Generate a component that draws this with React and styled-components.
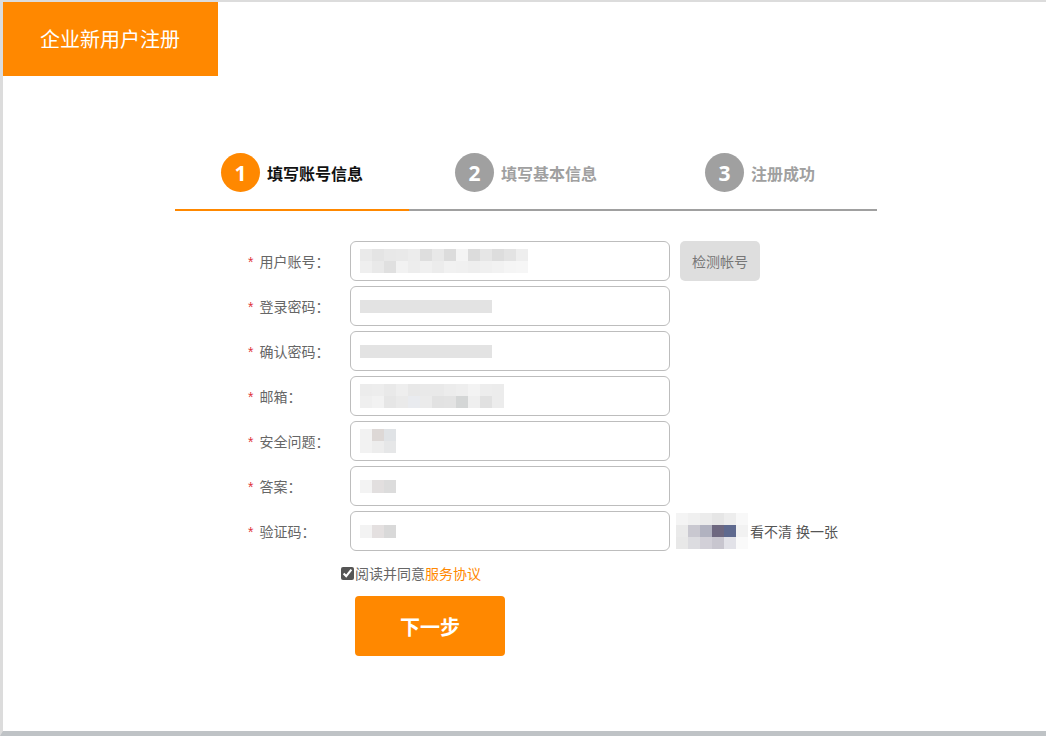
import React from "react";
import styled, { createGlobalStyle } from "styled-components";

const orange = "#ff8800";
const grey = "#a0a0a0";

const Global = createGlobalStyle`
  html, body {
    margin: 0;
    padding: 0;
    background: #fff;
  }
  body {
    font-family: "Liberation Sans", "Noto Sans CJK SC", sans-serif;
  }
`;

const Page = styled.div`
  width: 1046px;
  height: 736px;
  box-sizing: border-box;
  border-top: 2px solid #dcdcdc;
  border-left: 3px solid #dcdcdc;
  border-bottom: 5px solid #bfc3c6;
  overflow: hidden;
`;

const Header = styled.div`
  width: 215px;
  height: 74px;
  background: ${orange};
  color: #fff;
  font-size: 20px;
  line-height: 76px;
  padding-left: 37px;
  box-sizing: border-box;
`;

const Steps = styled.div`
  display: flex;
  width: 702px;
  margin: 67px 0 0 172px;
`;

const Step = styled.div`
  flex: 1;
  display: flex;
  align-items: flex-start;
  justify-content: center;
  gap: 7px;
  height: 68px;
  box-sizing: border-box;
  padding-top: 10px;
  border-bottom: 2px solid ${(p) => (p.$active ? orange : grey)};
`;

const Circle = styled.div`
  width: 39px;
  height: 39px;
  border-radius: 50%;
  background: ${(p) => (p.$active ? orange : grey)};
  color: #fff;
  font-family: "Open Sans", "Liberation Sans", sans-serif;
  font-weight: 700;
  font-size: 21px;
  display: flex;
  align-items: center;
  justify-content: center;
`;

const StepText = styled.div`
  font-size: 16px;
  font-weight: 700;
  line-height: 39px;
  color: ${(p) => (p.$active ? "#111" : grey)};
  margin-top: 2px;
`;

const Form = styled.div`
  margin: 30px 0 0 245px;
  display: flex;
  flex-direction: column;
  gap: 5px;
`;

const Row = styled.div`
  display: flex;
  align-items: center;
  height: 40px;
`;

const Label = styled.div`
  width: 102px;
  font-size: 14px;
  color: #666;
  &::before {
    content: "*";
    color: #e0353a;
    margin-right: 6px;
  }
`;

const Field = styled.div`
  width: 320px;
  height: 40px;
  box-sizing: border-box;
  border: 1px solid #bdbdbd;
  border-radius: 6px;
  background: #fff;
  display: flex;
  align-items: center;
  padding-left: 9px;
`;

const Mosaic = styled.div`
  display: grid;
  grid-template-columns: repeat(${(p) => p.$cols}, 12px);
  grid-auto-rows: ${(p) => p.$h || 12}px;
`;

const Cell = styled.div`
  background: ${(p) => p.$c};
`;

const CheckBtn = styled.div`
  margin-left: 10px;
  width: 80px;
  height: 40px;
  border-radius: 5px;
  background: #dedede;
  color: #777;
  font-size: 14px;
  display: flex;
  align-items: center;
  justify-content: center;
`;

const Captcha = styled.div`
  margin-left: 6px;
  width: 70px;
  height: 40px;
  display: flex;
  align-items: center;
`;

const Refresh = styled.div`
  font-size: 14px;
  color: #555;
  margin-left: 4px;
`;

const Agree = styled.label`
  display: flex;
  align-items: center;
  margin: 7px 0 0 93px;
  font-size: 14px;
  color: #666;
  input {
    margin: 0 1px 0 0;
    width: 13px;
    height: 13px;
    accent-color: #555;
  }
  a {
    color: ${orange};
    text-decoration: none;
  }
`;

const NextBtn = styled.button`
  margin: 8px 0 0 107px;
  width: 150px;
  height: 60px;
  border: none;
  border-radius: 4px;
  background: ${orange};
  color: #fff;
  font-family: "Liberation Sans", "Noto Sans CJK SC", sans-serif;
  font-size: 20px;
  font-weight: 700;
  align-self: flex-start;
`;

const L = "#e9e9e9";
const mosaics = [
  { cols: 14, cells: ["#eaeaea", "#e4e4e4", "#e8e8e8", "#e9e9e9", "#ececec", "#dedede", "#e8e8e8", "#dcdcdc", "#f4f4f4", "#dcdcdc", "#e6e6e6", "#dddddd", "#e3e3e3", "#eeeeee",
    "#efefef", "#e9e9e9", "#e0e0e0", "#f2f2f2", "#ededed", "#f0f0f0", "#ececec", "#f1f1f1", "#f0f0f0", "#eeeeee", "#f0f0f0", "#f2f2f2", "#f5f5f5", "#f6f6f6"] },
  { cols: 11, h: 13, cells: Array(11).fill("#e3e3e3") },
  { cols: 11, h: 13, cells: Array(11).fill("#e3e3e3") },
  { cols: 12, cells: ["#ececec", "#ededed", "#e9e9e9", "#eeeeee", "#e8e8e8", "#e9e9e9", "#e9e9e9", "#ececec", "#eeeeee", "#f3f3f3", "#ededed", "#ececec",
    "#efefef", "#f2f2f2", "#e6e6e6", "#eaeaea", "#e9ebef", "#ebebeb", "#e2e2e2", "#e3e3e3", "#d4d6d6", "#efefef", "#e1e1e1", "#ececec"] },
  { cols: 3, cells: ["#f2f2f2", "#ddd8d6", "#e0e3e6", "#f2f2f2", "#ededed", "#e6e7e8"] },
  { cols: 3, h: 13, cells: ["#f3f3f3", "#e2dfdf", "#dcdcdc"] },
  { cols: 3, h: 13, cells: ["#f3f3f3", "#e4e0e0", "#d9d9d9"] },
];

const rows = [
  { label: "用户账号：", extra: <CheckBtn>检测帐号</CheckBtn> },
  { label: "登录密码：" },
  { label: "确认密码：" },
  { label: "邮箱：" },
  { label: "安全问题：" },
  { label: "答案：" },
  {
    label: "验证码：",
    extra: (
      <>
        <Captcha>
          <Mosaic $cols={6}>
            {["#f4f4f4", "#f0f0f0", "#ececec", "#e6e6e6", "#ededed", "#f8f8f8",
              "#eaeaea", "#c9c8d0", "#b1b2c0", "#6e6880", "#5f6a8f", "#f2f2f2",
              "#e8e8e8", "#dcdce0", "#d2d0d8", "#c8c6cf", "#e2e2e8", "#fafafa"].map((c, i) => (
              <Cell key={i} $c={c} />
            ))}
          </Mosaic>
        </Captcha>
        <Refresh>看不清 换一张</Refresh>
      </>
    ),
  },
];

export default function App() {
  return (
    <Page>
      <Global />
      <Header>企业新用户注册</Header>
      <Steps>
        <Step $active>
          <Circle $active>1</Circle>
          <StepText $active>填写账号信息</StepText>
        </Step>
        <Step>
          <Circle>2</Circle>
          <StepText>填写基本信息</StepText>
        </Step>
        <Step>
          <Circle>3</Circle>
          <StepText>注册成功</StepText>
        </Step>
      </Steps>
      <Form>
        {rows.map((r, i) => (
          <Row key={r.label}>
            <Label>{r.label}</Label>
            <Field>
              <Mosaic $cols={mosaics[i].cols} $h={mosaics[i].h}>
                {mosaics[i].cells.map((c, j) => (
                  <Cell key={j} $c={c || L} />
                ))}
              </Mosaic>
            </Field>
            {r.extra}
          </Row>
        ))}
        <Agree>
          <input type="checkbox" defaultChecked />
          阅读并同意<a href="#">服务协议</a>
        </Agree>
        <NextBtn>下一步</NextBtn>
      </Form>
    </Page>
  );
}
